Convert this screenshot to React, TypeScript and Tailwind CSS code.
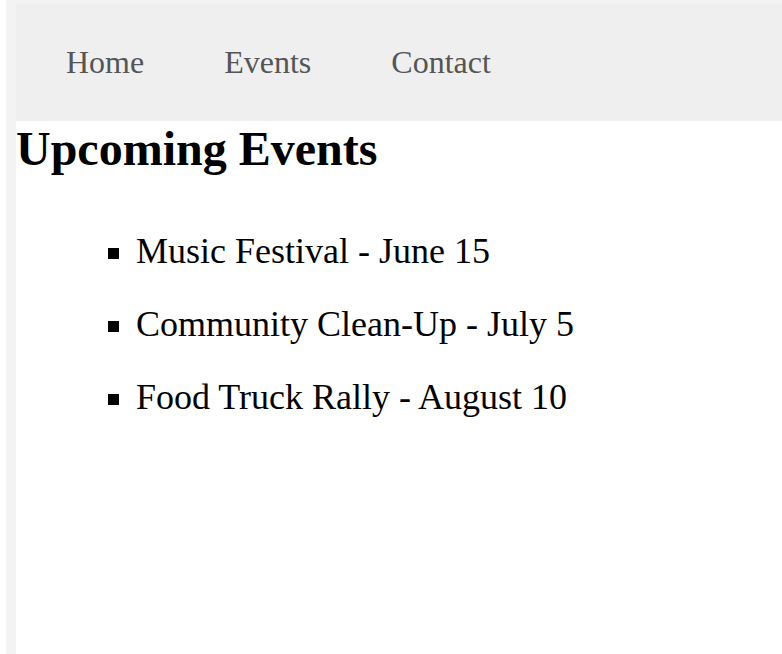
export default function App() {
  return (
    <div className="min-h-screen w-full bg-white pl-[6px]" style={{ fontFamily: '"Liberation Serif", "Times New Roman", serif' }}>
      <div className="flex min-h-[654px] flex-col bg-[#f3f3f3] pl-[10px] pt-[4px]">
        <div className="flex-1 bg-white">
          {/* Nav */}
          <nav className="flex h-[117px] items-center bg-[#efefef] pl-[10px]">
            {['Home', 'Events', 'Contact'].map((item) => (
              <a key={item} href="#" className="px-[40px] text-[32px] leading-[37px] text-[#555555]">
                {item}
              </a>
            ))}
          </nav>

          <h1 className="text-[48px] font-bold leading-[55px] text-black">Upcoming Events</h1>

          <ul className="mt-[55px] space-y-[32px] pl-[92px]">
            {['Music Festival - June 15', 'Community Clean-Up - July 5', 'Food Truck Rally - August 10'].map((ev) => (
              <li key={ev} className="flex items-start text-[36px] leading-[41px] text-black">
                <span className="mt-[17px] h-[11px] w-[11px] shrink-0 bg-black" />
                <span className="ml-[17px]">{ev}</span>
              </li>
            ))}
          </ul>
        </div>
      </div>
    </div>
  );
}
